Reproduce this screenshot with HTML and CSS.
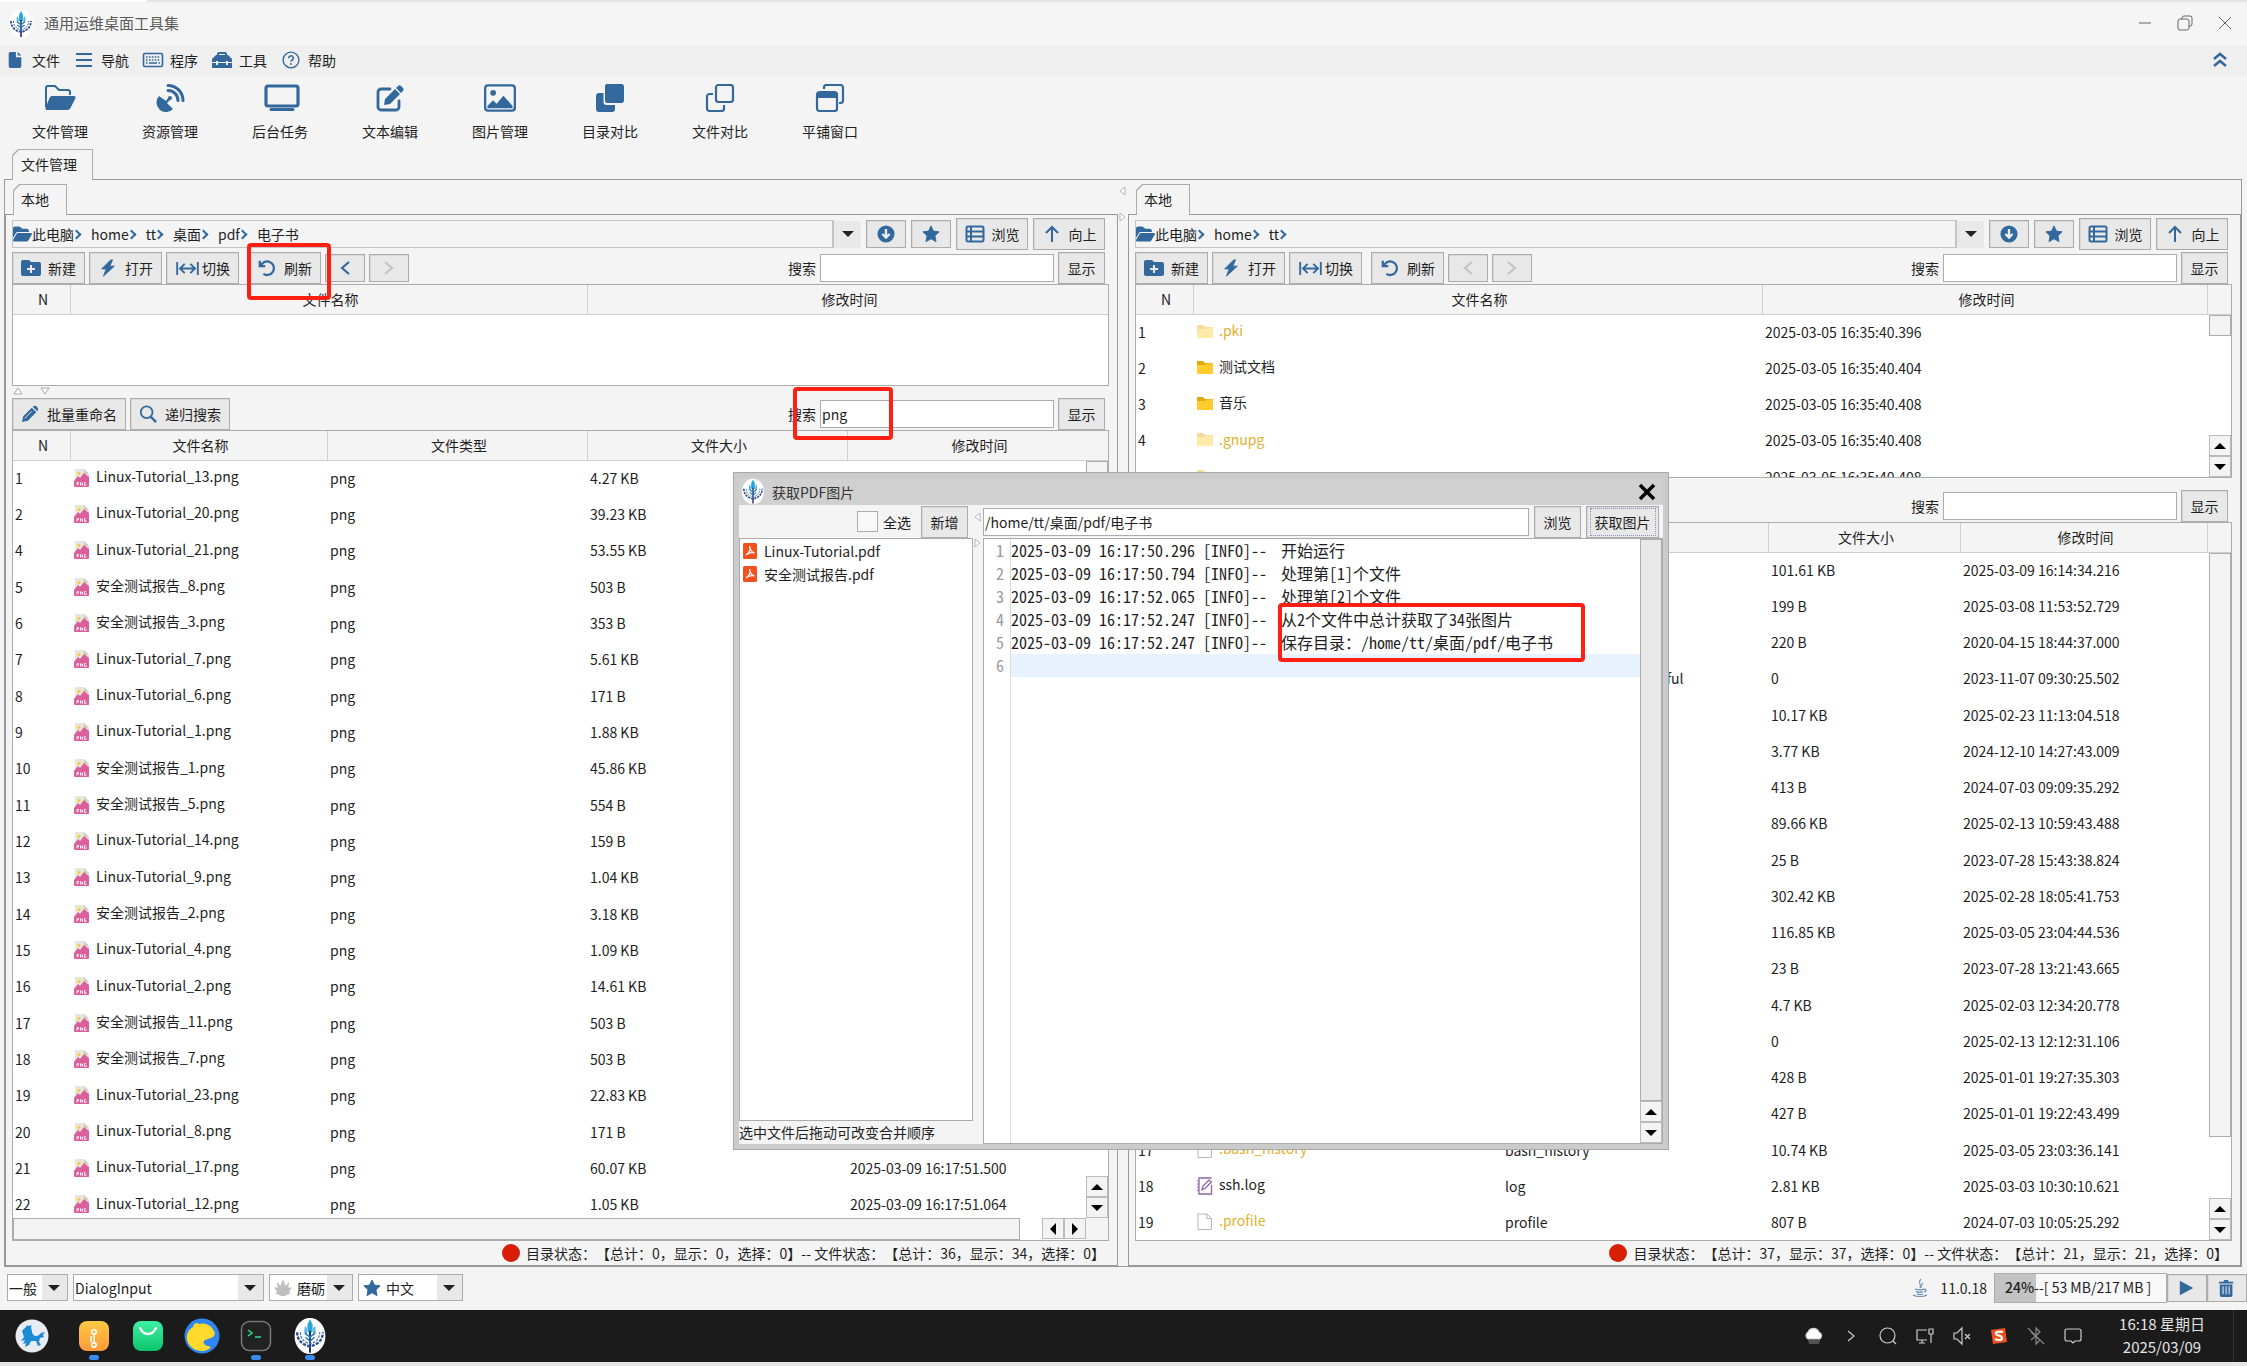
FILE: index.html
```html
<!DOCTYPE html>
<html lang="zh-CN">
<head>
<meta charset="utf-8">
<title>通用运维桌面工具集</title>
<link rel="stylesheet" href="styles.css">
</head>
<body>
<svg class="defs" aria-hidden="true">
  <symbol id="logo" viewBox="0 0 24 28"><ellipse cx="12" cy="14" rx="12" ry="14" fill="#fff"/><path d="M12 1l2 4v6h-4V5z" fill="#2aa5dd"/><path d="M8 6l1.500 2v6L7.500 12zM16 6l-1.500 2v6l2-2z" fill="#4ab0dc"/><path d="M12 10v17" fill="none" stroke="#23306f" stroke-width="1.600"/><path d="M8.500 12l3.500 3 3.500-3M8.500 15l3.500 3 3.500-3" fill="none" stroke="#2c7fbd" stroke-width="1.200"/><path d="M2 11c0 6 4 10 10 11 6-1 10-5 10-11" fill="none" stroke="#2b4f93" stroke-width="1.800" stroke-dasharray="2.500 1"/><path d="M4.500 11c0 5 3 8 7.500 9 4.500-1 7.500-4 7.500-9" fill="none" stroke="#4a6fb0" stroke-width="1" stroke-dasharray="2 1"/></symbol>
  <symbol id="folder-open" viewBox="0 0 576 512"><path fill="currentColor" d="M88.700 223.800L0 375.800V96C0 60.700 28.700 32 64 32H181.500c17 0 33.300 6.700 45.300 18.700l26.500 26.500c12 12 28.300 18.700 45.300 18.700H416c35.300 0 64 28.700 64 64v32H144c-22.800 0-43.800 12.100-55.300 31.800zm27.600 16.100C122.100 230 132.600 224 144 224H544c11.500 0 22 6.100 27.700 16.100s5.700 22.200-.1 32.100l-112 192C453.900 474 443.400 480 432 480H32c-11.500 0-22-6.100-27.700-16.100s-5.700-22.200 .1-32.100l112-192z"/></symbol>
  <symbol id="doc" viewBox="0 0 16 20"><path fill="currentColor" d="M3 1h6v6h6v10a2 2 0 0 1-2 2H3a2 2 0 0 1-2-2V3a2 2 0 0 1 2-2zm8 0l4 4h-4z"/></symbol>
  <symbol id="bars" viewBox="0 0 18 18"><path d="M1 3h16M1 9h16M1 15h16" stroke="currentColor" stroke-width="2"/></symbol>
  <symbol id="keyboard" viewBox="0 0 22 18"><rect x="1.500" y="2.500" width="19" height="13" rx="1.500" fill="none" stroke="currentColor" stroke-width="1.600"/><path d="M4 6h14M4 9h14" stroke="currentColor" stroke-width="1.600" stroke-dasharray="1.600 1.300"/><path d="M4 12h1.600M7 12h8M16.500 12h1.600" stroke="currentColor" stroke-width="1.600"/></symbol>
  <symbol id="toolbox" viewBox="0 0 20 18"><path d="M6 5V3a1 1 0 0 1 1-1h6a1 1 0 0 1 1 1v2" fill="none" stroke="currentColor" stroke-width="2"/><path fill="currentColor" d="M4 4h12l4 4v3h-4v-1h-2v1H6v-1H4v1H0V8zM0 12h4v2h2v-2h8v2h2v-2h4v5H0z"/></symbol>
  <symbol id="help" viewBox="0 0 20 20"><circle cx="10" cy="10" r="8.800" fill="none" stroke="currentColor" stroke-width="1.500"/><path d="M7.500 8a2.500 2.500 0 1 1 3.500 2.200c-.8.4-1 .8-1 1.800" fill="none" stroke="currentColor" stroke-width="1.700"/><circle cx="10" cy="14.500" r="1.100" fill="currentColor"/></symbol>
  <symbol id="t-folder" viewBox="0 0 32 26"><path d="M2 22V3a2 2 0 0 1 2-2h7l4 4h9a2 2 0 0 1 2 2v3" fill="none" stroke="currentColor" stroke-width="2"/><path fill="currentColor" d="M8 11h22q2 0 1.500 2l-5 10q-1 2-3 2H3q-2 0-1.500-2l4-10q.7-2 2.500-2z"/></symbol>
  <symbol id="t-dish" viewBox="0 0 28 28"><path fill="currentColor" d="M3 12a9 9 0 0 0 14 13l-6-6 3-3a2 2 0 1 0-2-2l-2 3z"/><path d="M12 6.500a10 10 0 0 1 10 10M12 1.500a15 15 0 0 1 15 15" fill="none" stroke="currentColor" stroke-width="3" stroke-linecap="round"/></symbol>
  <symbol id="t-screen" viewBox="0 0 36 28"><rect x="2" y="2" width="32" height="20" rx="2" fill="none" stroke="currentColor" stroke-width="3.200"/><path d="M7 25.500h22" stroke="currentColor" stroke-width="3" stroke-linecap="round"/></symbol>
  <symbol id="t-edit" viewBox="0 0 28 28"><path d="M14 5H5a3 3 0 0 0-3 3v15a3 3 0 0 0 3 3h15a3 3 0 0 0 3-3v-6" fill="none" stroke="currentColor" stroke-width="2.800" stroke-linecap="round"/><path fill="currentColor" d="M9 15l10-10 5 5-10 10-6 1zM20 4l2-2q1.500-1.500 3 0l2 2q1.500 1.500 0 3l-2 2z"/></symbol>
  <symbol id="t-image" viewBox="0 0 28 24"><rect x="1" y="1" width="26" height="22" rx="2.500" fill="none" stroke="currentColor" stroke-width="2"/><circle cx="8" cy="7.500" r="2.500" fill="currentColor"/><path fill="currentColor" d="M3 21v-2l5-5 3 3 6-7 8 9v2z"/></symbol>
  <symbol id="t-clone" viewBox="0 0 28 28"><path fill="currentColor" d="M12 0h14a2.500 2.500 0 0 1 2 2v15a2.500 2.500 0 0 1-2 2H12a2.500 2.500 0 0 1-3-2V2a2.500 2.500 0 0 1 3-2zM7.500 9v9q0 3 3 3H19v4a3 3 0 0 1-3 3H3a3 3 0 0 1-3-3V12a3 3 0 0 1 3-3z"/></symbol>
  <symbol id="t-copy" viewBox="0 0 28 28"><rect x="10" y="1" width="17" height="17" rx="2.500" fill="none" stroke="currentColor" stroke-width="2.200"/><path d="M7 10H3.500A2.500 2.500 0 0 0 1 12.500v12A2.500 2.500 0 0 0 3.500 27h12a2.500 2.500 0 0 0 2.500-2.500V21" fill="none" stroke="currentColor" stroke-width="2.200"/></symbol>
  <symbol id="t-window" viewBox="0 0 28 28"><rect x="1" y="8" width="20" height="19" rx="2.500" fill="none" stroke="currentColor" stroke-width="2.200"/><path fill="currentColor" d="M1 8h20v6H1z"/><path d="M8 5V3.500A2.500 2.500 0 0 1 10.500 1h14A2.500 2.500 0 0 1 27 3.500v13a2.500 2.500 0 0 1-2.500 2.500H23" fill="none" stroke="currentColor" stroke-width="2.200"/></symbol>
  <symbol id="new" viewBox="0 0 20 18"><path fill="currentColor" fill-rule="evenodd" d="M2 1h6l2 2h8a2 2 0 0 1 2 2v10a2 2 0 0 1-2 2H2a2 2 0 0 1-2-2V3a2 2 0 0 1 2-2zm7 5v3H6v2h3v3h2v-3h3V9h-3V6z"/></symbol>
  <symbol id="bolt" viewBox="0 0 18 20"><path fill="currentColor" d="M12 1L2 11h5l-3 8 12-11h-5l3-7z" stroke="currentColor" stroke-linejoin="round"/></symbol>
  <symbol id="swap" viewBox="0 0 24 16"><path d="M1 1v14M23 1v14M4 8h16M9 3L4 8l5 5M15 3l5 5-5 5" fill="none" stroke="currentColor" stroke-width="2"/></symbol>
  <symbol id="refresh" viewBox="0 0 20 20"><path d="M2 2v6h6M3 8a7.500 7.500 0 1 1 3 8.500" fill="none" stroke="currentColor" stroke-width="2.500"/></symbol>
  <symbol id="left" viewBox="0 0 14 18"><path d="M11 3L4 9l7 6" fill="none" stroke="currentColor" stroke-width="2.200"/></symbol>
  <symbol id="right" viewBox="0 0 14 18"><path d="M3 3l7 6-7 6" fill="none" stroke="currentColor" stroke-width="2.200"/></symbol>
  <symbol id="down" viewBox="0 0 20 20"><circle cx="10" cy="10" r="9.500" fill="currentColor"/><path d="M10 4.500v9M6 10l4 4 4-4" fill="none" stroke="#eee" stroke-width="2.600"/></symbol>
  <symbol id="star" viewBox="0 0 20 20"><path fill="currentColor" stroke="currentColor" stroke-linejoin="round" d="M10 1l2.700 5.800 6.300.8-4.600 4.400 1.200 6.500L10 15.300 4.400 18.500 5.600 12 1 7.600l6.300-.8z"/></symbol>
  <symbol id="list" viewBox="0 0 20 18"><rect x="1.500" y="1.500" width="17" height="15" rx="1.500" fill="none" stroke="currentColor" stroke-width="2"/><path d="M2 6.500h16M2 11.500h16M6 2v14" stroke="currentColor" stroke-width="2"/></symbol>
  <symbol id="up" viewBox="0 0 18 18"><path d="M9 17V2M3 8l6-6 6 6" fill="none" stroke="currentColor" stroke-width="2"/></symbol>
  <symbol id="pen" viewBox="0 0 20 20"><path fill="currentColor" d="M1 19l1.500-6.500L12 3l5 5-9.500 9.500zM13 2q2-2 4-.5l1.500 1.500Q20 5 18 7z"/><path d="M4 15l8-8" stroke="#e7e7e7"/></symbol>
  <symbol id="search" viewBox="0 0 20 20"><circle cx="8.500" cy="8" r="6.500" fill="none" stroke="currentColor" stroke-width="2"/><path d="M13 13l6 6" stroke="currentColor" stroke-width="2.600"/></symbol>
  <symbol id="png" viewBox="0 0 16 18"><path fill="#e8e6da" d="M1 0h9l5 5v13H1z"/><path fill="#cfcdbf" d="M10 0l5 5h-5z"/><circle cx="5" cy="4.500" r="1.500" fill="#f5c83c"/><path fill="#dc5f9b" d="M0 12l4-5 2 2 4-5 5 4v9q0 1-1 1H1q-1 0-1-1z"/><path d="M3 16.500v-3h1.500v1.500H3M6.500 16.500v-3l2 3v-3M12 13.500h-1.500v3H12V15" fill="none" stroke="#fff" stroke-width=".8"/></symbol>
  <symbol id="folder" viewBox="0 0 16 16"><path fill="#e3a90b" d="M0 1h6l2 2h8v3H0z"/><path fill="#ffcb2d" d="M0 5h8l1.500-1.500H16V14H0z"/></symbol>
  <symbol id="file" viewBox="0 0 16 18"><path fill="#fff" stroke="#b5b5b5" d="M1 1h9l4.500 4.500V16.500H1zM10 1v4.500h4.500"/></symbol>
  <symbol id="logfile" viewBox="0 0 16 18"><path fill="#fff" stroke="#8a63a9" stroke-width="1.300" d="M14.500 8v9H2V1h12.500"/><path d="M2 4H0M2 7H0M2 10H0M2 13H0" stroke="#8a63a9"/><path fill="none" stroke="#8a63a9" stroke-width="1.300" d="M5 13l1-4 6-6 2.500 2-6 6z"/></symbol>
  <symbol id="pdf" viewBox="0 0 14 16"><rect width="14" height="16" rx="1.500" fill="#f4511e"/><path d="M3 12c3-2 5-6 4-8s0 5 4.500 6C9 9 5 10 3 12" fill="none" stroke="#fff" stroke-width="1.200"/></symbol>
  <symbol id="leaf" viewBox="0 0 18 18"><path fill="#bfbfbf" d="M9 0l2.500 7L15 3l-.5 6 3.500-1-3 5 2 1-6 3H7l-6-3 2-1-3-5 3.500 1L3 3l3.500 4z"/></symbol>
</svg>

<div class="behind"><span></span></div>
<header class="titlebar">
  <svg class="app-logo"><use href="#logo"/></svg>
  <h1>通用运维桌面工具集</h1>
  <div class="win-buttons">
    <button aria-label="最小化"><svg viewBox="0 0 16 16"><path d="M2 8h12"/></svg></button>
    <button aria-label="还原"><svg viewBox="0 0 16 16"><rect x="1" y="4" width="11" height="11" rx="2"/><path d="M5 4V3a2 2 0 0 1 2-2h6a2 2 0 0 1 2 2v6a2 2 0 0 1-2 2h-1"/></svg></button>
    <button aria-label="关闭"><svg viewBox="0 0 16 16"><path d="M2 2l12 12M14 2L2 14"/></svg></button>
  </div>
</header>
<nav class="menubar">
  <button><svg><use href="#doc"/></svg>文件</button>
  <button><svg><use href="#bars"/></svg>导航</button>
  <button><svg><use href="#keyboard"/></svg>程序</button>
  <button><svg><use href="#toolbox"/></svg>工具</button>
  <button><svg><use href="#help"/></svg>帮助</button>
  <button class="collapse" aria-label="收起"><svg viewBox="0 0 16 18"><path d="M2 8l6-5 6 5M2 15l6-5 6 5" fill="none" stroke="currentColor" stroke-width="2.500"/></svg></button>
</nav>
<div class="toolbar">
  <button><svg><use href="#t-folder"/></svg>文件管理</button>
  <button><svg><use href="#t-dish"/></svg>资源管理</button>
  <button><svg class="wide"><use href="#t-screen"/></svg>后台任务</button>
  <button><svg><use href="#t-edit"/></svg>文本编辑</button>
  <button><svg><use href="#t-image"/></svg>图片管理</button>
  <button><svg><use href="#t-clone"/></svg>目录对比</button>
  <button><svg><use href="#t-copy"/></svg>文件对比</button>
  <button><svg><use href="#t-window"/></svg>平铺窗口</button>
</div>
<div class="tabs"><button class="tab tab-main">文件管理</button></div>

<main class="workspace">
  <section class="side">
    <div class="tabs tabs-inner"><button class="tab">本地</button></div>
    <div class="panel">
      <div class="pathrow">
        <div class="crumbs"><svg><use href="#folder-open"/></svg><a href="#">此电脑</a><i></i><a href="#">home</a><i></i><a href="#">tt</a><i></i><a href="#">桌面</a><i></i><a href="#">pdf</a><i></i><a href="#">电子书</a></div>
        <button class="drop" aria-label="历史路径"></button>
        <button class="btn small" aria-label="下载"><svg><use href="#down"/></svg></button>
        <button class="btn small" aria-label="收藏"><svg><use href="#star"/></svg></button>
        <button class="btn"><svg><use href="#list"/></svg>浏览</button>
        <button class="btn"><svg><use href="#up"/></svg>向上</button>
      </div>
      <div class="toolrow">
        <button class="btn"><svg><use href="#new"/></svg>新建</button>
        <button class="btn"><svg><use href="#bolt"/></svg>打开</button>
        <button class="btn tight"><svg><use href="#swap"/></svg>切换</button>
        <button class="btn gap"><svg><use href="#refresh"/></svg>刷新</button>
        <button class="btn small" aria-label="后退"><svg><use href="#left"/></svg></button>
        <button class="btn small" aria-label="前进" disabled><svg><use href="#right"/></svg></button>
        <label for="s1">搜索</label><input id="s1" class="field"><button class="btn show">显示</button>
      </div>
      <div class="box dirs-left">
        <table><colgroup><col class="c-n"><col class="c-half"><col></colgroup>
          <thead><tr><th>N<th>文件名称<th>修改时间</thead>
        </table>
      </div>
      <div class="splitter"><svg viewBox="0 0 40 10"><path d="M2 8l4-6 4 6zM29 2l4 6 4-6z"/></svg></div>
      <div class="toolrow lower">
        <button class="btn auto"><svg><use href="#pen"/></svg>批量重命名</button>
        <button class="btn auto"><svg><use href="#search"/></svg>递归搜索</button>
        <label for="s2">搜索</label><input id="s2" class="field" value="png"><button class="btn show">显示</button>
      </div>
      <div class="box grow">
        <div class="view">
          <table class="files-left"><colgroup><col class="c-n"><col class="c-name"><col><col><col></colgroup>
            <thead><tr><th>N<th>文件名称<th>文件类型<th>文件大小<th>修改时间</thead>
            <tbody>
              <tr><td>1<td><svg><use href="#png"/></svg>Linux-Tutorial_13.png<td>png<td>4.27 KB<td>
              <tr><td>2<td><svg><use href="#png"/></svg>Linux-Tutorial_20.png<td>png<td>39.23 KB<td>
              <tr><td>4<td><svg><use href="#png"/></svg>Linux-Tutorial_21.png<td>png<td>53.55 KB<td>
              <tr><td>5<td><svg><use href="#png"/></svg>安全测试报告_8.png<td>png<td>503 B<td>
              <tr><td>6<td><svg><use href="#png"/></svg>安全测试报告_3.png<td>png<td>353 B<td>
              <tr><td>7<td><svg><use href="#png"/></svg>Linux-Tutorial_7.png<td>png<td>5.61 KB<td>
              <tr><td>8<td><svg><use href="#png"/></svg>Linux-Tutorial_6.png<td>png<td>171 B<td>
              <tr><td>9<td><svg><use href="#png"/></svg>Linux-Tutorial_1.png<td>png<td>1.88 KB<td>
              <tr><td>10<td><svg><use href="#png"/></svg>安全测试报告_1.png<td>png<td>45.86 KB<td>
              <tr><td>11<td><svg><use href="#png"/></svg>安全测试报告_5.png<td>png<td>554 B<td>
              <tr><td>12<td><svg><use href="#png"/></svg>Linux-Tutorial_14.png<td>png<td>159 B<td>
              <tr><td>13<td><svg><use href="#png"/></svg>Linux-Tutorial_9.png<td>png<td>1.04 KB<td>
              <tr><td>14<td><svg><use href="#png"/></svg>安全测试报告_2.png<td>png<td>3.18 KB<td>
              <tr><td>15<td><svg><use href="#png"/></svg>Linux-Tutorial_4.png<td>png<td>1.09 KB<td>
              <tr><td>16<td><svg><use href="#png"/></svg>Linux-Tutorial_2.png<td>png<td>14.61 KB<td>
              <tr><td>17<td><svg><use href="#png"/></svg>安全测试报告_11.png<td>png<td>503 B<td>
              <tr><td>18<td><svg><use href="#png"/></svg>安全测试报告_7.png<td>png<td>503 B<td>
              <tr><td>19<td><svg><use href="#png"/></svg>Linux-Tutorial_23.png<td>png<td>22.83 KB<td>
              <tr><td>20<td><svg><use href="#png"/></svg>Linux-Tutorial_8.png<td>png<td>171 B<td>
              <tr><td>21<td><svg><use href="#png"/></svg>Linux-Tutorial_17.png<td>png<td>60.07 KB<td>2025-03-09 16:17:51.500
              <tr><td>22<td><svg><use href="#png"/></svg>Linux-Tutorial_12.png<td>png<td>1.05 KB<td>2025-03-09 16:17:51.064
            </tbody>
          </table>
          <div class="vscroll"><div class="thumb" style="height:88%"></div><button class="a-up" aria-label="上滚"></button><button class="a-down" aria-label="下滚"></button></div>
        </div>
        <div class="hscroll"><div class="thumb"></div><button class="a-left" aria-label="左滚"></button><button class="a-right" aria-label="右滚"></button><span></span></div>
      </div>
      <p class="status"><b></b>目录状态：【总计：0，显示：0，选择：0】-- 文件状态：【总计：36，显示：34，选择：0】</p>
    </div>
  </section>

  <div class="divider"><svg viewBox="0 0 8 36"><path d="M7 1v8L2 5zM2 27v8l5-4z"/></svg></div>

  <section class="side">
    <div class="tabs tabs-inner"><button class="tab">本地</button></div>
    <div class="panel">
      <div class="pathrow">
        <div class="crumbs"><svg><use href="#folder-open"/></svg><a href="#">此电脑</a><i></i><a href="#">home</a><i></i><a href="#">tt</a><i></i></div>
        <button class="drop" aria-label="历史路径"></button>
        <button class="btn small" aria-label="下载"><svg><use href="#down"/></svg></button>
        <button class="btn small" aria-label="收藏"><svg><use href="#star"/></svg></button>
        <button class="btn"><svg><use href="#list"/></svg>浏览</button>
        <button class="btn"><svg><use href="#up"/></svg>向上</button>
      </div>
      <div class="toolrow">
        <button class="btn"><svg><use href="#new"/></svg>新建</button>
        <button class="btn"><svg><use href="#bolt"/></svg>打开</button>
        <button class="btn tight"><svg><use href="#swap"/></svg>切换</button>
        <button class="btn gap"><svg><use href="#refresh"/></svg>刷新</button>
        <button class="btn small" aria-label="后退" disabled><svg><use href="#left"/></svg></button>
        <button class="btn small" aria-label="前进" disabled><svg><use href="#right"/></svg></button>
        <label for="s3">搜索</label><input id="s3" class="field"><button class="btn show">显示</button>
      </div>
      <div class="box dirs-right">
        <div class="view">
          <table class="files-right"><colgroup><col class="c-n"><col class="c-dir"><col><col class="c-scroll"></colgroup>
            <thead><tr><th>N<th>文件名称<th>修改时间<th></thead>
            <tbody>
              <tr class="hid"><td>1<td><svg><use href="#folder"/></svg>.pki<td>2025-03-05 16:35:40.396<td>
              <tr><td>2<td><svg><use href="#folder"/></svg>测试文档<td>2025-03-05 16:35:40.404<td>
              <tr><td>3<td><svg><use href="#folder"/></svg>音乐<td>2025-03-05 16:35:40.408<td>
              <tr class="hid"><td>4<td><svg><use href="#folder"/></svg>.gnupg<td>2025-03-05 16:35:40.408<td>
              <tr class="hid"><td><td><svg><use href="#folder"/></svg><td>2025-03-05 16:35:40.408<td>
            </tbody>
          </table>
          <div class="vscroll"><div class="thumb" style="height:13%"></div><button class="a-up" aria-label="上滚"></button><button class="a-down" aria-label="下滚"></button></div>
        </div>
      </div>
      <div class="splitter"></div>
      <div class="toolrow lower"><label for="s4">搜索</label><input id="s4" class="field"><button class="btn show">显示</button></div>
      <div class="box grow">
        <div class="view">
          <table class="files-right"><colgroup><col class="c-n"><col class="c-name2"><col class="c-type2"><col class="c-size2"><col><col class="c-scroll"></colgroup>
            <thead><tr><th>N<th><th><th>文件大小<th>修改时间<th></thead>
            <tbody>
              <tr><td><td><td><td>101.61 KB<td>2025-03-09 16:14:34.216<td>
              <tr><td><td><td><td>199 B<td>2025-03-08 11:53:52.729<td>
              <tr><td><td><td><td>220 B<td>2020-04-15 18:44:37.000<td>
              <tr><td><td><td>sudo_as_admin_successful<td>0<td>2023-11-07 09:30:25.502<td>
              <tr><td><td><td><td>10.17 KB<td>2025-02-23 11:13:04.518<td>
              <tr><td><td><td><td>3.77 KB<td>2024-12-10 14:27:43.009<td>
              <tr><td><td><td><td>413 B<td>2024-07-03 09:09:35.292<td>
              <tr><td><td><td><td>89.66 KB<td>2025-02-13 10:59:43.488<td>
              <tr><td><td><td><td>25 B<td>2023-07-28 15:43:38.824<td>
              <tr><td><td><td><td>302.42 KB<td>2025-02-28 18:05:41.753<td>
              <tr><td><td><td><td>116.85 KB<td>2025-03-05 23:04:44.536<td>
              <tr><td><td><td><td>23 B<td>2023-07-28 13:21:43.665<td>
              <tr><td><td><td><td>4.7 KB<td>2025-02-03 12:34:20.778<td>
              <tr><td><td><td><td>0<td>2025-02-13 12:12:31.106<td>
              <tr><td><td><td><td>428 B<td>2025-01-01 19:27:35.303<td>
              <tr><td><td><td><td>427 B<td>2025-01-01 19:22:43.499<td>
              <tr class="hid"><td>17<td><svg><use href="#file"/></svg>.bash_history<td>bash_history<td>10.74 KB<td>2025-03-05 23:03:36.141<td>
              <tr><td>18<td><svg><use href="#logfile"/></svg>ssh.log<td>log<td>2.81 KB<td>2025-03-03 10:30:10.621<td>
              <tr class="hid"><td>19<td><svg><use href="#file"/></svg>.profile<td>profile<td>807 B<td>2024-07-03 10:05:25.292<td>
            </tbody>
          </table>
          <div class="vscroll"><div class="thumb" style="height:85%"></div><button class="a-up" aria-label="上滚"></button><button class="a-down" aria-label="下滚"></button></div>
        </div>
      </div>
      <p class="status"><b></b>目录状态：【总计：37，显示：37，选择：0】-- 文件状态：【总计：21，显示：21，选择：0】</p>
    </div>
  </section>
</main>

<footer class="bottombar">
  <div class="combo w-level"><select aria-label="级别"><option>一般</option></select></div>
  <div class="combo w-font"><select aria-label="字体"><option>DialogInput</option></select></div>
  <div class="combo w-theme"><svg><use href="#leaf"/></svg><select aria-label="主题"><option>磨砺</option></select></div>
  <div class="combo w-lang"><svg><use href="#star"/></svg><select aria-label="语言"><option>中文</option></select></div>
  <svg class="java" viewBox="0 0 16 20"><path d="M9 1c-4 4 1 5-1 9M11 5c-3 2-1 3-2 5" fill="none" stroke="#7fa0be" stroke-width="1.200"/><path d="M3 11c3 1 7 1 9 0M4 13.500c2 1 5 1 7 0M5 16c2 1 4 1 6 0M1 17c4 2 10 2 14 0M12 11c3 0 2 3 0 3" fill="none" stroke="#5b87ae" stroke-width="1.200"/></svg>
  <span class="version">11.0.18</span>
  <div class="memory"><b>24%</b>--[ 53 MB/217 MB ]</div>
  <button class="btn small" aria-label="运行"><svg viewBox="0 0 20 20"><path fill="currentColor" d="M2 2l15 8-15 8z"/></svg></button>
  <button class="btn small" aria-label="清理"><svg viewBox="0 0 20 20"><path fill="currentColor" fill-rule="evenodd" d="M1 3h5l1-2h4l1 2h5v2H1zM2 6h14v12q0 2-2 2H4q-2 0-2-2zm3 2v9h1.200V8zm3.400 0v9h1.200V8zm3.400 0v9H13V8z"/></svg></button>
</footer>

<div class="taskbar">
  <div class="dock">
    <button aria-label="启动器"><svg viewBox="0 0 36 36"><circle cx="18" cy="18" r="16.500" fill="#e9ebf2"/><path fill="#1b8bd8" d="M8 13c2-3 4-3 5-6 1 2 3 0 5 0-2 2 0 4 0 7 1 4 4 5 7 3l2-2 4-1-2 3 1 2-4 1-1 4 2 3-3 1-2-5-5 0-2 4-4 2 1-4-3 1 2-4-4 1 3-4z"/></svg></button>
    <button class="on" aria-label="文件管理器"><svg viewBox="0 0 36 36"><defs><linearGradient id="g1" x2="0" y2="1"><stop stop-color="#ffc945"/><stop offset="1" stop-color="#ff9a3a"/></linearGradient></defs><rect x="3" y="3" width="30" height="30" rx="8" fill="url(#g1)"/><path d="M3 14l15 8 15-8" stroke="#ffb12d" fill="none"/><path d="M18 16v10M15 18v6" stroke="#fff" stroke-width="1.500"/><circle cx="18" cy="14" r="2.200" fill="none" stroke="#fff" stroke-width="1.600"/><circle cx="18" cy="27" r="2.200" fill="none" stroke="#fff" stroke-width="1.600"/></svg></button>
    <button aria-label="应用商店"><svg viewBox="0 0 36 36"><defs><linearGradient id="g2" x2="0" y2="1"><stop stop-color="#3df2a4"/><stop offset="1" stop-color="#0cc56d"/></linearGradient></defs><rect x="3" y="3" width="30" height="30" rx="8" fill="url(#g2)"/><path d="M10 10c4 8 12 8 16 0" stroke="#fff" stroke-width="2.500" fill="none" stroke-linecap="round"/></svg></button>
    <button aria-label="浏览器"><svg viewBox="0 0 36 36"><circle cx="18" cy="18" r="17.500" fill="#2f86f0"/><path fill="#ffd92b" d="M9 9c1-4 4-5 6-3 6-2 12 1 15 7 2 3 0 6-3 7l-6 2q-3 2 0 5l6 2C22 36 6 34 3 22 2 16 5 11 9 9z"/></svg></button>
    <button class="on" aria-label="终端"><svg viewBox="0 0 36 36"><rect x="3.500" y="3.500" width="29" height="29" rx="8" fill="#222" stroke="#777" stroke-width="1.500"/><path d="M10 12l4 3-4 3" fill="none" stroke="#2be08c" stroke-width="1.500"/><path d="M17 19h6" stroke="#2be08c" stroke-width="1.500"/></svg></button>
    <button class="on" aria-label="通用运维桌面工具集"><svg><use href="#logo"/></svg></button>
  </div>
  <div class="tray">
    <button aria-label="天气"><svg viewBox="0 0 20 20"><path fill="#fff" d="M4 13a4 4 0 0 1 0-7 6 6 0 0 1 11 0 4 4 0 0 1 1 7z"/><path d="M4 15h12M5 17h10" stroke="#888"/></svg></button>
    <button aria-label="展开"><svg viewBox="0 0 20 20"><path d="M7 5l6 5-6 5"/></svg></button>
    <button aria-label="搜索"><svg viewBox="0 0 20 20"><circle cx="9.500" cy="9.500" r="7.500"/><path d="M15 15l3 3"/></svg></button>
    <button aria-label="网络"><svg viewBox="0 0 20 20"><path d="M12 4H2v10h10M4 17h6M7 14v3M16 8v9M14 3h4v5h-4z"/></svg></button>
    <button aria-label="静音"><svg viewBox="0 0 20 20"><path d="M2 7h3l5-5v16l-5-5H2zM13 8l5 5M18 8l-5 5"/></svg></button>
    <button aria-label="输入法"><svg viewBox="0 0 20 20"><path d="M2 4l14-2 2 14-14 2z" fill="#f0501e" stroke="none"/><path d="M14 6c-4-1-8 0-7 2s6 1 6 4-5 2-7 1" stroke="#fff" stroke-width="2.200"/></svg></button>
    <button class="off" aria-label="蓝牙"><svg viewBox="0 0 20 20"><path d="M5 6l9 8-4 4V2l4 4-9 8M2 2l16 16"/></svg></button>
    <button aria-label="通知"><svg viewBox="0 0 20 20"><path d="M4 3h12q2 0 2 2v8q0 2-2 2h-4l-2 2-2-2H4q-2 0-2-2V5q0-2 2-2z"/></svg></button>
  </div>
  <div class="clock"><span>16:18 星期日</span><span>2025/03/09</span></div>
  <div class="desk"></div>
</div>

<section class="dialog" role="dialog" aria-label="获取PDF图片">
  <header><svg><use href="#logo"/></svg><h2>获取PDF图片</h2><button aria-label="关闭"><svg viewBox="0 0 18 18"><path d="M2 2l14 14M16 2L2 16" stroke="#000" stroke-width="3.500"/></svg></button></header>
  <div class="dlg-body">
    <div class="dlg-left">
      <div class="dlg-row end"><input type="checkbox" id="all"><label for="all">全选</label><button class="btn show">新增</button></div>
      <ul><li><svg><use href="#pdf"/></svg>Linux-Tutorial.pdf</li><li><svg><use href="#pdf"/></svg>安全测试报告.pdf</li></ul>
      <p>选中文件后拖动可改变合并顺序</p>
    </div>
    <div class="dlg-split"><svg viewBox="0 0 8 36"><path d="M7 1v8L2 5zM2 27v8l5-4z"/></svg></div>
    <div class="dlg-right">
      <div class="dlg-row"><input class="field" aria-label="保存目录" value="/home/tt/桌面/pdf/电子书"><button class="btn show">浏览</button><button class="btn go"><span>获取图片</span></button></div>
      <div class="log">
        <ol>
          <li><time>2025-03-09 16:17:50.296 [INFO]--</time><span>开始运行</span></li>
          <li><time>2025-03-09 16:17:50.794 [INFO]--</time><span>处理第[1]个文件</span></li>
          <li><time>2025-03-09 16:17:52.065 [INFO]--</time><span>处理第[2]个文件</span></li>
          <li><time>2025-03-09 16:17:52.247 [INFO]--</time><span>从2个文件中总计获取了34张图片</span></li>
          <li><time>2025-03-09 16:17:52.247 [INFO]--</time><span>保存目录：/home/tt/桌面/pdf/电子书</span></li>
          <li class="cur"><span></span></li>
          <li class="rest"><span></span></li>
        </ol>
        <div class="vscroll dark"><div class="thumb"></div><button class="a-up" aria-label="上滚"></button><button class="a-down" aria-label="下滚"></button></div>
      </div>
    </div>
  </div>
</section>
<div class="mark mark-refresh"></div>
<div class="mark mark-search"></div>
<div class="mark mark-log"></div>
</body>
</html>
```

FILE: styles.css
```css
*, *::before, *::after { box-sizing: border-box; }
:root { --blue: #33689c; --line: #acacac; --bg: #f4f4f4; }
body {
  margin: 0; min-height: 100vh; position: relative; overflow: hidden;
  display: flex; flex-direction: column;
  background: var(--bg); color: #1e1e1e;
  font: 14px/20px "Noto Sans CJK SC", sans-serif;
  text-spacing-trim: space-all;
}
.defs { position: absolute; width: 0; height: 0; }
button, input, select { font: inherit; color: inherit; margin: 0; padding: 0; border: 0; background: none; border-radius: 0; }
h1, h2, p, ul, ol { margin: 0; padding: 0; font-weight: normal; list-style: none; }
svg { flex: none; }

.behind { height: 2px; background: #e4e4e4; }
.behind span { display: block; width: 147px; height: 2px; background: #fff; }
.titlebar { height: 43px; display: flex; align-items: center; background: #f5f5f5; padding-bottom: 1px; }
.app-logo { width: 24px; height: 28px; margin: 2px 11px 0 9px; }
h1 { font-size: 15px; color: #5a5a5a; flex: 1; }
.win-buttons { display: flex; gap: 24px; margin-right: 14px; }
.win-buttons button { width: 16px; height: 16px; display: flex; }
.win-buttons svg { width: 16px; height: 16px; fill: none; stroke: #666; }

.menubar { height: 31px; display: flex; align-items: center; background: #efefef; padding: 0 0 2px 2px; }
.menubar button { width: 69px; display: flex; align-items: center; gap: 6px; }
.menubar svg { width: 22px; height: 18px; color: var(--blue); margin-left: 2px; }
.menubar .collapse { margin-left: auto; width: 40px; }

.toolbar { height: 73px; display: flex; padding: 8px 0 0 5px; }
.toolbar button { width: 110px; display: flex; flex-direction: column; align-items: center; gap: 9px; }
.toolbar svg { width: 32px; height: 28px; color: var(--blue); }
.toolbar .wide { width: 36px; margin-left: 4px; }

.tabs { display: flex; height: 31px; margin-bottom: -1px; padding-left: 12px; position: relative; z-index: 1; flex: none; }
.tab {
  padding: 0 16px 1px 8px; background: var(--line); position: relative; isolation: isolate; width: 54px; text-align: left; white-space: nowrap;
  clip-path: polygon(0 6px, 6px 0, 100% 0, 100% 100%, 0 100%);
}
.tab::before { content: ""; position: absolute; inset: 1px 1px 0; background: var(--bg); z-index: -1; clip-path: polygon(0 6px, 6px 0, 100% 0, 100% 100%, 0 100%); }
.tab-main { width: 81px; padding-left: 9px; }
.tabs-inner { height: 35px; padding: 4px 0 0 8px; }

.workspace { flex: 1; margin: 0 5px 0 4px; border: 1px solid #999; display: grid; grid-template-columns: minmax(0, 1fr) 10px minmax(0, 1fr); }
.side { display: flex; flex-direction: column; min-width: 0; }
.panel { flex: 1; display: flex; flex-direction: column; border: 1px solid #999; padding: 3px 8px 0 6px; }
.divider svg { width: 8px; height: 36px; margin-top: 6px; fill: #fff; stroke: #b5b5b5; }

.pathrow { display: flex; align-items: center; height: 32px; padding-right: 4px; gap: 5px; }
.crumbs { flex: 1; height: 28px; display: flex; align-items: center; border: 1px solid #c4c4c4; border-right-width: 2px; }
.crumbs svg { width: 19px; height: 18px; color: var(--blue); }
.crumbs a { color: inherit; text-decoration: none; }
.crumbs i { width: 7px; height: 7px; border: solid var(--blue); border-width: 2px 2px 0 0; transform: rotate(45deg); margin: 0 11px 0 -1px; }
.drop { width: 27px; height: 27px; background: #e9e9e9; display: grid; place-items: center; margin-left: -5px; }
.drop::after, .combo::after { content: ""; border: 6px solid transparent; border-top-color: #222; border-bottom: 0; }
.btn { width: 73px; height: 32px; border: 1px solid var(--line); background: #e8e8e8; display: flex; align-items: center; justify-content: center; gap: 7px; white-space: nowrap; flex: none; box-shadow: inset 1px 1px #d8d8d8; }
.btn svg { width: 20px; height: 18px; color: var(--blue); }
.btn.small { width: 40px; height: 28px; }
.pathrow .btn:not(.small) { width: 72px; }
.btn:disabled svg { color: #c3c3c3; }
.btn.tight { gap: 2px; }
.btn.tight svg { width: 25px; height: 15px; }
.btn.gap { margin-left: 5px; }
.btn.show { width: 47px; }
.btn.auto { width: auto; padding: 0 8px 0 7px; }
.toolrow { display: flex; align-items: center; height: 34px; padding: 2px 4px 0 0; gap: 4px; }
.toolrow.lower { height: 32px; padding-top: 0; }
.toolrow label { margin-left: auto; }
.field { height: 28px; width: 234px; border: 1px solid var(--line); background: #fff; padding: 0 1px; }

.box { border: 1px solid var(--line); display: flex; flex-direction: column; }
.dirs-left { height: 102px; background: #fff; }
.dirs-right { height: 194px; }
.box.grow { flex: 1 1 0; min-height: 0; }
.view { flex: 1 1 0; min-height: 0; position: relative; overflow: hidden; background: #fff; }
table { width: 100%; border-collapse: separate; border-spacing: 0; table-layout: fixed; }
th { height: 30px; padding: 0 0 2px 3px; font-weight: normal; background: var(--bg); border-right: 1px solid #cfcfcf; border-bottom: 1px solid #cfcfcf; }
th:last-child { border-right: 0; }
td { height: 36px; padding: 0 2px 3px; white-space: nowrap; }
.files-left tr:nth-child(3n) td, .files-right tr:nth-child(4n) td { height: 37px; }
td svg { width: 16px; height: 18px; margin: 0 6px 2px 1px; vertical-align: middle; }
.hid td:nth-child(2) { color: #dfb12e; }
.hid svg { opacity: .4; }
.grow .hid svg { opacity: 1; }
.c-n { width: 58px; } .c-half { width: 517px; } .c-name { width: 257px; }
.c-dir { width: 569px; } .c-scroll { width: 23px; }
.c-name2 { width: 309px; } .c-type2 { width: 266px; } .c-size2 { width: 192px; }

.vscroll { position: absolute; right: 0; top: 30px; bottom: 0; width: 22px; display: flex; flex-direction: column; background: #fff; }
.thumb { background: #f3f3f3; border: 1px solid var(--line); }
.vscroll .thumb { margin-bottom: auto; }
.vscroll button, .hscroll button { width: 22px; height: 21px; border: 1px solid #bbb; background: #f3f3f3; display: grid; place-items: center; }
.vscroll button::after, .hscroll button::after { content: ""; border: 6px solid transparent; }
.vscroll .a-up::after { border-bottom-color: #000; border-top: 0; }
.vscroll .a-down::after { border-top-color: #000; border-bottom: 0; }
.hscroll .a-left::after { border-right-color: #000; border-left: 0; }
.hscroll .a-right::after { border-left-color: #000; border-right: 0; }
.hscroll { height: 22px; display: flex; background: #fff; }
.hscroll .thumb { flex: 1; margin-right: 22px; }
.hscroll span { width: 22px; background: var(--bg); }
.splitter { height: 12px; }
.splitter svg { width: 40px; height: 10px; display: block; fill: #fff; stroke: #aaa; }
.status { height: 24px; display: flex; align-items: center; justify-content: flex-end; padding-right: 4px; white-space: nowrap; }
.status b { width: 18px; height: 18px; border-radius: 50%; background: #d81e06; margin-right: 6px; }

.bottombar { height: 43px; display: flex; align-items: center; padding: 0 0 2px 7px; gap: 5px; }
.combo { height: 27px; display: flex; align-items: center; border: 1px solid var(--line); background: linear-gradient(90deg, #e8e8e8, #e8e8e8) right / 25px 100% no-repeat #fff; padding-right: 7px; }
.combo select { flex: 1; min-width: 0; appearance: none; height: 25px; padding: 0 1px; }
.combo svg { width: 20px; height: 18px; color: var(--blue); margin: 0 3px; }
.w-level { width: 61px; } .w-font { width: 191px; } .w-theme { width: 84px; } .w-lang { width: 105px; }
.java { width: 16px; height: 20px; margin-left: auto; }
.version { margin: 0 2px 0 7px; }
.memory { width: 173px; height: 30px; border: 1px solid var(--line); line-height: 26px; padding-left: 10px; background: linear-gradient(90deg, #c3c3c3 24%, #f8f8f8 24%); white-space: nowrap; }
.memory b { font-weight: 500; }
.bottombar .btn { margin-left: -5px; }

.taskbar { height: 56px; background: #1b1b1b; border-bottom: 4px solid #e6e6e6; display: flex; align-items: center; color: #e3e3e3; }
.dock { display: flex; gap: 18px; padding-left: 14px; flex: 1; }
.dock button { width: 36px; height: 50px; display: flex; flex-direction: column; justify-content: center; position: relative; }
.dock button:first-child { margin-right: 8px; }
.dock svg { width: 36px; height: 36px; }
.dock .on::after { content: ""; position: absolute; left: 13px; bottom: 1px; width: 10px; height: 5px; border-radius: 3px; background: #3a8cf0; }
.tray { display: flex; gap: 17px; margin-right: 35px; }
.tray button { width: 20px; height: 20px; display: flex; }
.tray svg { width: 20px; height: 20px; fill: none; stroke: #ccc; stroke-width: 1.2; }
.tray .off svg { stroke: #888; }
.clock { width: 88px; font-size: 15px; line-height: 23px; display: flex; flex-direction: column; align-items: center; white-space: nowrap; padding-bottom: 2px; }
.desk { width: 41px; height: 52px; border-right: 13px solid #1b1b1b; box-shadow: inset -1px 0 #333; }

.dialog { position: absolute; left: 733px; top: 472px; width: 936px; height: 678px; border: 1px solid #a8a8a8; background: #cbcbcb; padding: 5px; display: flex; flex-direction: column; }
.dialog header { height: 27px; display: flex; align-items: center; background: #d0d0d0; padding: 0 7px 0 3px; }
.dialog header > svg { width: 22px; height: 27px; margin-right: 8px; }
.dialog h2 { font-size: 14px; flex: 1; color: #333; }
.dialog header button { width: 18px; height: 18px; display: flex; }
.dlg-body { flex: 1; min-height: 0; display: grid; grid-template-columns: 234px 10px minmax(0, 1fr); background: var(--bg); }
.dlg-left, .dlg-right { display: flex; flex-direction: column; min-height: 0; }
.dlg-row { height: 33px; display: flex; align-items: center; gap: 5px; padding-right: 4px; }
.dlg-row.end { justify-content: flex-end; padding-right: 5px; }
.dlg-row .field { flex: 1; }
.dlg-row input[type="checkbox"] { appearance: none; width: 21px; height: 21px; border: 1px solid var(--line); background: #f8f8f8; }
.dlg-row label { margin-right: 5px; }
.go span { border: 1px dotted #8f8fc4; padding: 3px 4px; }
.dlg-left ul { flex: 1; border: 1px solid var(--line); background: #fff; padding: 0 3px; }
.dlg-left li { height: 23px; display: flex; align-items: center; gap: 7px; }
.dlg-left li svg { width: 14px; height: 16px; }
.dlg-left p { height: 23px; line-height: 22px; }
.dlg-split svg { width: 8px; height: 36px; margin-top: 7px; fill: #fff; stroke: #b5b5b5; }
.log { flex: 1; min-height: 0; border: 1px solid var(--line); background: #fff; display: flex; font: 16px/23px "Noto Sans Mono CJK SC", "Noto Sans CJK SC", monospace; }
.log ol { flex: 1; counter-reset: line; display: flex; flex-direction: column; }
.log li { display: flex; height: 23px; counter-increment: line; white-space: nowrap; }
.log li::before { content: counter(line); width: 27px; padding-right: 6px; text-align: right; color: #999; border-right: 1px solid #ddd; flex: none; }
.log li span { flex: 1; }
.log time + span { margin-left: 14px; }
.log .cur span { background: #e8f2fe; }
.log .rest { flex: 1; }
.log .rest::before { content: ""; }
.vscroll.dark { position: static; width: 22px; }
.dark .thumb { flex: 1; background: #e8e8e8; }

.mark { position: absolute; border: 4px solid #ff2013; border-radius: 4px; }
.mark-refresh { left: 247px; top: 243px; width: 84px; height: 57px; }
.mark-search { left: 793px; top: 387px; width: 100px; height: 53px; }
.mark-log { left: 1278px; top: 603px; width: 307px; height: 59px; }
```
